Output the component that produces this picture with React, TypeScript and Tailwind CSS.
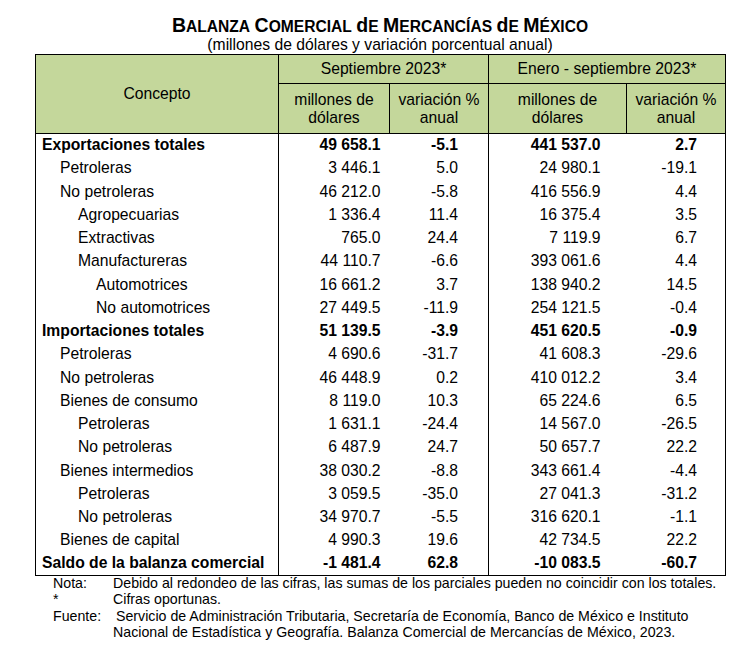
const rows: { c: string; l: number; b?: boolean; v: string[] }[] = [
  { c: "Exportaciones totales", l: 0, b: true, v: ["49 658.1", "-5.1", "441 537.0", "2.7"] },
  { c: "Petroleras", l: 1, v: ["3 446.1", "5.0", "24 980.1", "-19.1"] },
  { c: "No petroleras", l: 1, v: ["46 212.0", "-5.8", "416 556.9", "4.4"] },
  { c: "Agropecuarias", l: 2, v: ["1 336.4", "11.4", "16 375.4", "3.5"] },
  { c: "Extractivas", l: 2, v: ["765.0", "24.4", "7 119.9", "6.7"] },
  { c: "Manufactureras", l: 2, v: ["44 110.7", "-6.6", "393 061.6", "4.4"] },
  { c: "Automotrices", l: 3, v: ["16 661.2", "3.7", "138 940.2", "14.5"] },
  { c: "No automotrices", l: 3, v: ["27 449.5", "-11.9", "254 121.5", "-0.4"] },
  { c: "Importaciones totales", l: 0, b: true, v: ["51 139.5", "-3.9", "451 620.5", "-0.9"] },
  { c: "Petroleras", l: 1, v: ["4 690.6", "-31.7", "41 608.3", "-29.6"] },
  { c: "No petroleras", l: 1, v: ["46 448.9", "0.2", "410 012.2", "3.4"] },
  { c: "Bienes de consumo", l: 1, v: ["8 119.0", "10.3", "65 224.6", "6.5"] },
  { c: "Petroleras", l: 2, v: ["1 631.1", "-24.4", "14 567.0", "-26.5"] },
  { c: "No petroleras", l: 2, v: ["6 487.9", "24.7", "50 657.7", "22.2"] },
  { c: "Bienes intermedios", l: 1, v: ["38 030.2", "-8.8", "343 661.4", "-4.4"] },
  { c: "Petroleras", l: 2, v: ["3 059.5", "-35.0", "27 041.3", "-31.2"] },
  { c: "No petroleras", l: 2, v: ["34 970.7", "-5.5", "316 620.1", "-1.1"] },
  { c: "Bienes de capital", l: 1, v: ["4 990.3", "19.6", "42 734.5", "22.2"] },
  { c: "Saldo de la balanza comercial", l: 0, b: true, v: ["-1 481.4", "62.8", "-10 083.5", "-60.7"] },
];

const indent = ["pl-[6px]", "pl-[24px]", "pl-[42px]", "pl-[60px]"];
// right padding per numeric column
const padR = ["pr-[9px]", "pr-[30px]", "pr-[26px]", "pr-[28px]"];
const divider = ["", "", "border-l border-black", ""];

function SmallCaps({ text }: { text: string }) {
  // mimic Word's small caps: first letter of each word big, rest smaller
  return (
    <>
      {text.split(" ").map((w, i) => (
        <span key={i}>
          {i > 0 && " "}
          <span className="text-[19.5px]">{w[0]}</span>
          <span className="text-[15.6px]">{w.slice(1).toUpperCase()}</span>
        </span>
      ))}
    </>
  );
}

export default function App() {
  return (
    <div className="w-[742px] h-[672px] bg-white text-black font-['Liberation_Sans',Arial,sans-serif]">
      <div className="ml-[35px] w-[690px] pt-[15px] text-center">
        <div className="h-[21px] leading-[21px] font-bold">
          <SmallCaps text="Balanza Comercial de Mercancías de México" />
        </div>
        <div className="h-[18px] leading-[18px] text-[15.7px]">
          (millones de dólares y variación porcentual anual)
        </div>
      </div>

      <table className="ml-[35px] w-[690px] table-fixed border-collapse border border-black text-[15.7px]">
        <colgroup>
          <col className="w-[243px]" />
          <col className="w-[111px]" />
          <col className="w-[99px]" />
          <col className="w-[138px]" />
          <col className="w-[99px]" />
        </colgroup>
        <thead className="bg-[#c4d79b]">
          <tr className="h-[29px]">
            <th rowSpan={2} className="border border-black font-normal text-center align-middle">
              Concepto
            </th>
            <th colSpan={2} className="border border-black font-normal text-center leading-[18px]">
              Septiembre 2023*
            </th>
            <th colSpan={2} className="border border-black font-normal text-center leading-[18px]">
              Enero - septiembre 2023*
            </th>
          </tr>
          <tr className="h-[50px]">
            <th className="border border-black font-normal text-center leading-[17.5px]">
              millones de
              <br />
              dólares
            </th>
            <th className="border border-black font-normal text-center leading-[17.5px]">
              variación %
              <br />
              anual
            </th>
            <th className="border border-black font-normal text-center leading-[17.5px]">
              millones de
              <br />
              dólares
            </th>
            <th className="border border-black font-normal text-center leading-[17.5px]">
              variación %
              <br />
              anual
            </th>
          </tr>
        </thead>
        <tbody>
          {rows.map((r, i) => (
            <tr key={i} className={`h-[23.25px] ${r.b ? "font-bold" : ""}`}>
              <td className={`border-r border-black whitespace-nowrap leading-[18px] ${indent[r.l]}`}>{r.c}</td>
              {r.v.map((v, j) => (
                <td
                  key={j}
                  className={`text-right whitespace-nowrap leading-[18px] ${padR[j]} ${divider[j]}`}
                >
                  {v}
                </td>
              ))}
            </tr>
          ))}
        </tbody>
      </table>

      <div className="ml-[53px] mt-[-1px] text-[14.2px] leading-[16.4px]">
        <div className="flex">
          <span className="w-[60px] shrink-0">Nota:</span>
          <span className="whitespace-nowrap">
            Debido al redondeo de las cifras, las sumas de los parciales pueden no coincidir con los totales.
          </span>
        </div>
        <div className="flex">
          <span className="w-[60px] shrink-0">*</span>
          <span>Cifras oportunas.</span>
        </div>
        <div className="flex">
          <span className="w-[60px] shrink-0">Fuente:</span>
          <span className="whitespace-nowrap">
            <span className="pl-[3px]">
              Servicio de Administración Tributaria, Secretaría de Economía, Banco de México e Instituto
            </span>
            <br />
            Nacional de Estadística y Geografía. Balanza Comercial de Mercancías de México, 2023.
          </span>
        </div>
      </div>
    </div>
  );
}
